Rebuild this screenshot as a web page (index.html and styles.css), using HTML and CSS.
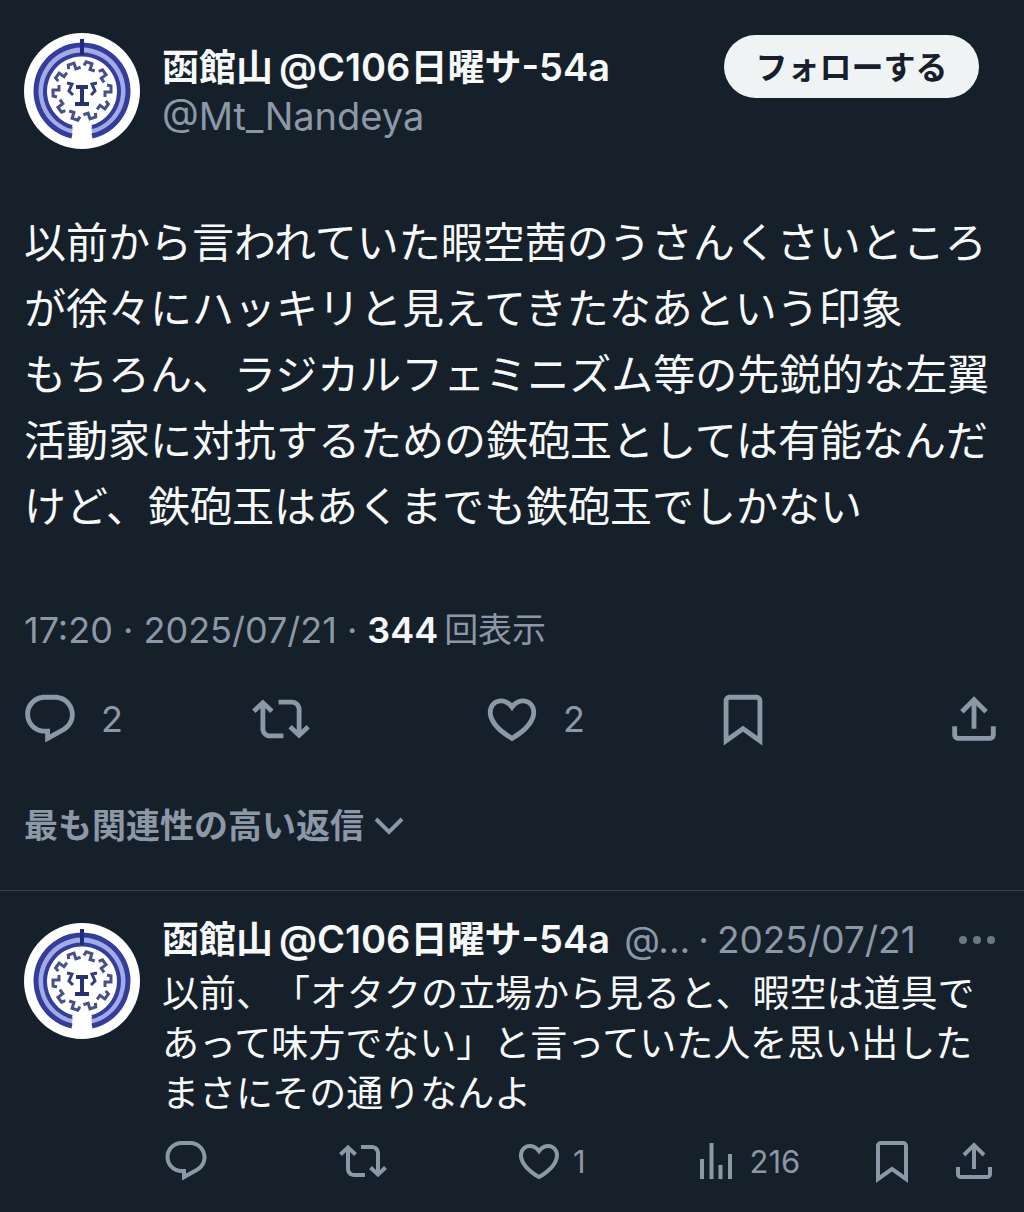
FILE: index.html
```html
<!DOCTYPE html>
<html lang="ja">
<head>
<meta charset="utf-8">
<meta name="viewport" content="width=device-width, initial-scale=1">
<title>函館山@C106日曜サ-54a</title>
<link rel="stylesheet" href="styles.css">
</head>
<body>
<svg class="defs" aria-hidden="true">
  <symbol id="reply" viewBox="0 0 24 24"><path d="M1.751 10c0-4.42 3.584-8 8.005-8h4.366c4.49 0 8.129 3.64 8.129 8.13 0 2.96-1.607 5.68-4.196 7.11l-8.054 4.46v-3.69h-.067c-4.49.1-8.183-3.51-8.183-8.01zm8.005-6c-3.317 0-6.005 2.69-6.005 6 0 3.37 2.77 6.08 6.138 6.01l.351-.01h1.761v2.3l5.087-2.81c1.951-1.08 3.163-3.13 3.163-5.36 0-3.39-2.744-6.13-6.129-6.13H9.756z"/></symbol>
  <symbol id="repost" viewBox="0 0 24 24"><path d="M4.5 3.88l4.432 4.14-1.364 1.46L5.5 7.55V16c0 1.1.896 2 2 2H13v2H7.5c-2.209 0-4-1.79-4-4V7.55L1.432 9.48.068 8.02 4.5 3.88zM16.5 6H11V4h5.5c2.209 0 4 1.79 4 4v8.45l2.068-1.93 1.364 1.46-4.432 4.14-4.432-4.14 1.364-1.46 2.068 1.93V8c0-1.1-.896-2-2-2z"/></symbol>
  <symbol id="like" viewBox="0 0 24 24"><path d="M16.697 5.5c-1.222-.06-2.679.51-3.89 2.16l-.805 1.09-.806-1.09C9.984 6.01 8.526 5.44 7.304 5.5c-1.243.07-2.349.78-2.91 1.91-.552 1.12-.633 2.78.479 4.82 1.074 1.97 3.257 4.27 7.129 6.61 3.87-2.34 6.052-4.64 7.126-6.61 1.111-2.04 1.03-3.7.477-4.82-.561-1.13-1.666-1.84-2.908-1.91zm4.187 7.69c-1.351 2.48-4.001 5.12-8.379 7.67l-.503.3-.504-.3c-4.379-2.55-7.029-5.19-8.382-7.67-1.36-2.5-1.41-4.86-.514-6.67.887-1.79 2.647-2.91 4.601-3.01 1.651-.09 3.368.56 4.798 2.01 1.429-1.45 3.146-2.1 4.796-2.01 1.954.1 3.714 1.22 4.601 3.01.896 1.81.846 4.17-.514 6.67z"/></symbol>
  <symbol id="views" viewBox="0 0 24 24"><path d="M8.75 21V3h2v18h-2zM18 21V8.5h2V21h-2zM4 21l.004-10h2L6 21H4zm9.248 0v-7h2v7h-2z"/></symbol>
  <symbol id="bookmark" viewBox="0 0 24 24"><path d="M4 4.5C4 3.12 5.119 2 6.5 2h11C18.881 2 20 3.12 20 4.5v18.44l-8-5.71-8 5.71V4.5zM6.5 4c-.276 0-.5.22-.5.5v14.56l6-4.29 6 4.29V4.5c0-.28-.224-.5-.5-.5h-11z"/></symbol>
  <symbol id="share" viewBox="0 0 24 24"><path d="M12 2.59l5.7 5.7-1.41 1.42L13 6.41V16h-2V6.41l-3.3 3.3-1.41-1.42L12 2.59zM21 15v3.5c0 1.38-1.12 2.5-2.5 2.5h-13C4.11 21 3 19.88 3 18.5V15h2v3.5c0 .28.22.5.5.5h13c.28 0 .5-.22.5-.5V15z"/></symbol>
  <symbol id="emblem" viewBox="-58 -58 116 116">
    <circle r="58" fill="#fff"/>
    <g fill="none">
      <path d="M-10 41A42 42 0 1 1 10 41" stroke="#a3abe6" stroke-width="10"/>
      <path d="M-10 45A46 46 0 1 1 10 45" stroke="#333d9a" stroke-width="5"/>
      <path d="M-10 36A37 37 0 1 1 10 36" stroke="#333d9a" stroke-width="4"/>
      <path d="M0-52V-36" stroke="#1f2a7c" stroke-width="4"/>
      <g stroke="#46508a" stroke-width="3">
        <path id="key" d="M-6-25L-5-29H1V-23H6" transform="rotate(18)"/>
        <use href="#key" transform="rotate(36)"/><use href="#key" transform="rotate(72)"/>
        <use href="#key" transform="rotate(108)"/><use href="#key" transform="rotate(144)"/>
        <use href="#key" transform="rotate(180)"/><use href="#key" transform="rotate(216)"/>
        <use href="#key" transform="rotate(252)"/><use href="#key" transform="rotate(288)"/>
        <use href="#key" transform="rotate(324)"/>
      </g>
      <path d="M-6-4H6M0-4V12M-7 13H7" stroke="#27336f" stroke-width="4"/>
      <path d="M-15-8L-10-7L-13 0L-9 4M15-8L10-7L13 0L9 4" stroke="#333d7d" stroke-width="3"/>
    </g>
  </symbol>
</svg>
<main>
  <article class="post">
    <header class="author">
      <svg class="avatar" role="img" aria-label="函館山"><use href="#emblem"/></svg>
      <div class="names">
        <a class="name" href="#">函館山<span class="latin event">@C106</span>日曜サ<span class="latin">-54a</span></a>
        <a class="handle" href="#">@Mt_Nandeya</a>
      </div>
      <button class="follow">フォローする</button>
    </header>
    <p class="body">以前から言われていた暇空茜のうさんくさいところ<br>が徐々にハッキリと見えてきたなあという印象<br>もちろん、ラジカルフェミニズム等の先鋭的な左翼<br>活動家に対抗するための鉄砲玉としては有能なんだ<br>けど、鉄砲玉はあくまでも鉄砲玉でしかない</p>
    <div class="meta"><time>17:20 · 2025/07/21</time><span>·</span><span class="views"><strong>344</strong><span class="unit">回表示</span></span></div>
    <div class="actions">
      <button aria-label="返信"><svg><use href="#reply"/></svg>2</button>
      <button aria-label="リポスト"><svg><use href="#repost"/></svg></button>
      <button aria-label="いいね"><svg><use href="#like"/></svg>2</button>
      <button aria-label="ブックマーク"><svg><use href="#bookmark"/></svg></button>
      <button aria-label="共有"><svg><use href="#share"/></svg></button>
    </div>
  </article>
  <button class="sort">最も関連性の高い返信<svg viewBox="0 0 30 18"><path d="M2 2L15 15L28 2"/></svg></button>
  <article class="comment">
    <svg class="avatar" role="img" aria-label="函館山"><use href="#emblem"/></svg>
    <div class="content">
      <header class="byline">
        <a class="name" href="#">函館山<span class="latin event">@C106</span>日曜サ<span class="latin">-54a</span></a>
        <a class="handle" href="#">@...</a><span class="dot">·</span><time>2025/07/21</time>
        <button class="more" aria-label="もっと見る"><svg viewBox="0 0 36 8"><circle cx="4" cy="4" r="4"/><circle cx="18" cy="4" r="4"/><circle cx="32" cy="4" r="4"/></svg></button>
      </header>
      <p class="text">以前、「オタクの立場から見ると、暇空は道具で<br>あって味方でない」と言っていた人を思い出した<br>まさにその通りなんよ</p>
      <div class="actions small">
        <button aria-label="返信"><svg><use href="#reply"/></svg></button>
        <button aria-label="リポスト"><svg><use href="#repost"/></svg></button>
        <button aria-label="いいね"><svg><use href="#like"/></svg>1</button>
        <button aria-label="表示"><svg><use href="#views"/></svg>216</button>
        <button aria-label="ブックマーク"><svg><use href="#bookmark"/></svg></button>
        <button aria-label="共有"><svg><use href="#share"/></svg></button>
      </div>
    </div>
  </article>
</main>
</body>
</html>
```
FILE: styles.css
```css
* { box-sizing: border-box; }
body {
  margin: 0;
  background: #16202a;
  color: #f7f9f9;
  font-family: Inter, "Noto Sans CJK JP", sans-serif;
  text-spacing-trim: space-all;
}
a { color: inherit; text-decoration: none; }
button {
  padding: 0;
  border: 0;
  background: none;
  color: inherit;
  font: inherit;
  cursor: pointer;
}
p { margin: 0; white-space: nowrap; }
.defs { position: absolute; width: 0; height: 0; }
.avatar { flex: none; width: 116px; height: 116px; }
.author {
  display: flex;
  align-items: flex-start;
  padding: 33px 45px 0 24px;
}
.names { flex: 1; display: flex; flex-direction: column; padding: 10px 0 0 22px; }
.name, .handle { line-height: 48px; white-space: nowrap; }
.name { font-size: 37px; font-weight: 600; }
.latin, .handle { font-size: 38px; }
.event { margin-left: 6px; }
.handle, .meta, .actions, .sort, .dot, .byline time { color: #8c98a7; }
.follow {
  width: 255px;
  height: 63px;
  margin-top: 2px;
  padding-bottom: 4px;
  border-radius: 32px;
  background: #eff3f4;
  color: #17202a;
  font-size: 32px;
  font-weight: 600;
}
.body { padding: 61px 0 0 24px; font-size: 42px; line-height: 66px; }
.meta {
  display: flex;
  gap: 10px;
  padding: 66px 24px 0;
  font-size: 36px;
  line-height: 48px;
}
.meta strong { color: #f7f9f9; font-weight: 600; }
.views { display: flex; gap: 6px; }
.unit { font-size: 34px; }
.actions {
  display: grid;
  grid-template-columns: repeat(4, 1fr) 58px;
  padding: 36px 21px 0;
  font-size: 36px;
}
.actions button { display: flex; align-items: center; gap: 22px; height: 58px; }
.actions svg { flex: none; width: 58px; height: 58px; fill: currentColor; }
.sort {
  display: flex;
  align-items: center;
  gap: 10px;
  padding: 54px 24px 40px;
  font-size: 34px;
  font-weight: 600;
  line-height: 48px;
}
.sort svg { width: 30px; height: 18px; fill: none; stroke: currentColor; stroke-width: 4; }
.comment {
  display: flex;
  gap: 22px;
  padding: 32px 26px 0 24px;
  border-top: 1px solid #38444d;
}
.content { flex: 1; min-width: 0; }
.byline { display: flex; align-items: center; margin-top: -8px; font-size: 37px; line-height: 48px; }
.byline .handle { margin-left: 14px; font-size: 37px; }
.dot { margin: 0 8px; }
.more { display: flex; margin: 0 3px 0 auto; }
.more svg { width: 36px; height: 8px; fill: #6b7985; }
.text { padding-top: 5px; font-size: 37px; line-height: 50px; }
.small {
  grid-template-columns: repeat(4, 1fr) 82px 48px;
  padding: 18px 0 0;
  font-size: 31px;
}
.small button { height: 48px; gap: 10px; }
.small svg { width: 48px; height: 48px; }
```
